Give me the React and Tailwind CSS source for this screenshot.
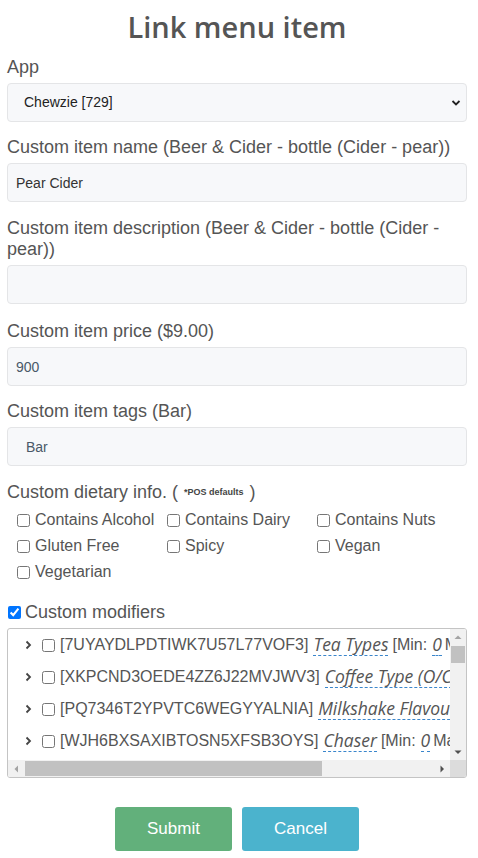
import { useState } from 'react';

const dietary = [
  'Contains Alcohol',
  'Contains Dairy',
  'Contains Nuts',
  'Gluten Free',
  'Spicy',
  'Vegan',
  'Vegetarian',
];

const modifiers = [
  { code: '7UYAYDLPDTIWK7U57L77VOF3', name: 'Tea Types', min: 0, max: 1 },
  { code: 'XKPCND3OEDE4ZZ6J22MVJWV3', name: 'Coffee Type (O/C)', min: 0, max: 1 },
  { code: 'PQ7346T2YPVTC6WEGYYALNIA', name: 'Milkshake Flavours', min: 0, max: 1 },
  { code: 'WJH6BXSAXIBTOSN5XFSB3OYS', name: 'Chaser', min: 0, max: 1 },
  { code: 'K3N5QZ7TRW2LMX4PYD6HJA8E', name: 'Milk Options', min: 0, max: 1 },
];

const italic = { fontFamily: '"Open Sans", sans-serif' };

function Label({ children }) {
  return <label className="block text-[18px] leading-[21px] text-[#555] mb-[5px]">{children}</label>;
}

function TextInput({ value, className = '' }) {
  return (
    <input
      type="text"
      defaultValue={value}
      className={`block w-full h-[39px] bg-[#f7f8fa] border border-[#e4e5e7] rounded-[4px] text-[14px] outline-none ${className}`}
    />
  );
}

function Chevron() {
  return (
    <svg width="7" height="10" viewBox="0 0 7 10" className="shrink-0">
      <path d="M1.5 1.5 L5 5 L1.5 8.5" fill="none" stroke="#444" strokeWidth="1.8" />
    </svg>
  );
}

function Linked({ children, className = '' }) {
  return (
    <span
      className={`italic text-[17.5px] leading-[21px] border-b border-dashed border-[#3a86cc] ${className}`}
      style={italic}
    >
      {children}
    </span>
  );
}

function ModifierRow({ m }) {
  return (
    <div className="flex items-center h-[32px] pl-[17px] whitespace-nowrap text-[16px] text-[#555]">
      <Chevron />
      <input type="checkbox" className="w-[13px] h-[13px] ml-[10px] mr-[5px] my-0" />
      <span>[{m.code}]</span>
      <Linked className="ml-[5px]">{m.name}</Linked>
      <span className="ml-[4px]">[Min:</span>
      <Linked className="ml-[5px]">{m.min}</Linked>
      <span className="ml-[3px]">Max:</span>
      <Linked className="ml-[5px]">{m.max}</Linked>
      <span>]</span>
    </div>
  );
}

function Arrow({ dir, color }) {
  const pts = {
    up: '0.5,5 4,1.5 7.5,5',
    down: '0.5,1.5 4,5 7.5,1.5',
    left: '5,0.5 1.5,4 5,7.5',
    right: '1.5,0.5 5,4 1.5,7.5',
  }[dir];
  const vertical = dir === 'up' || dir === 'down';
  return (
    <svg width={vertical ? 8 : 7} height={vertical ? 7 : 8} viewBox={vertical ? '0 0 8 7' : '0 0 7 8'}>
      <polygon points={pts} fill={color} />
    </svg>
  );
}

export default function App() {
  const [custom, setCustom] = useState(true);

  return (
    <div className="min-h-screen bg-white" style={{ fontFamily: '"Liberation Sans", Arial, sans-serif' }}>
      <div className="ml-[7px] w-[460px] pt-[7px] pb-[7px]">
        <h1
          className="text-center text-[29px] leading-[40px] font-semibold text-[#555] mb-[10px]"
          style={{ fontFamily: '"Open Sans", sans-serif' }}
        >
          Link menu item
        </h1>

        <div className="mb-[15px]">
          <Label>App</Label>
          <div className="relative">
            <select className="block w-full h-[39px] appearance-none bg-[#f7f8fa] border border-[#e4e5e7] rounded-[4px] pl-[16px] text-[14px] text-[#222] outline-none">
              <option>Chewzie [729]</option>
            </select>
            <svg width="10" height="8" viewBox="0 0 10 8" className="absolute right-[6px] top-[16px] pointer-events-none">
              <path d="M1.5 2 L5 5.5 L8.5 2" fill="none" stroke="#222" strokeWidth="1.8" />
            </svg>
          </div>
        </div>

        <div className="mb-[16px]">
          <Label>Custom item name (Beer &amp; Cider - bottle (Cider - pear))</Label>
          <TextInput value="Pear Cider" className="pl-[8px] text-[#333]" />
        </div>

        <div className="mb-[17px]">
          <Label>Custom item description (Beer &amp; Cider - bottle (Cider - pear))</Label>
          <TextInput value="" className="pl-[8px] text-[#333]" />
        </div>

        <div className="mb-[15px]">
          <Label>Custom item price ($9.00)</Label>
          <TextInput value="900" className="pl-[8px] text-[#4a5868]" />
        </div>

        <div className="mb-[16px]">
          <Label>Custom item tags (Bar)</Label>
          <TextInput value="Bar" className="pl-[18px] text-[#4a5868]" />
        </div>

        <div className="text-[18px] leading-[21px] text-[#555] flex items-center">
          <span>Custom dietary info. (</span>
          <span className="text-[9px] font-bold mx-[6px] text-[#444]">*POS defaults</span>
          <span>)</span>
        </div>
        <div className="grid grid-cols-[150px_150px_150px] pl-[10px] mt-[4px]">
          {dietary.map((d) => (
            <label key={d} className="flex items-center h-[26px] text-[16px] text-[#555] whitespace-nowrap">
              <input type="checkbox" className="w-[13px] h-[13px] my-0 ml-0 mr-[5px]" />
              {d}
            </label>
          ))}
        </div>

        <label className="flex items-center mt-[15px] h-[24px] text-[18px] text-[#555]">
          <input
            type="checkbox"
            checked={custom}
            onChange={(e) => setCustom(e.target.checked)}
            className="w-[13px] h-[13px] my-0 ml-[1px] mr-[4px]"
          />
          Custom modifiers
        </label>

        <div className="mt-[4px] h-[150px] border border-[#c4c4c4] rounded-[3px] overflow-hidden grid grid-cols-[1fr_16px] grid-rows-[1fr_17px]">
          <div className="overflow-hidden">
            {modifiers.map((m) => (
              <ModifierRow key={m.code} m={m} />
            ))}
          </div>
          <div className="bg-[#f1f1f1] flex flex-col">
            <div className="h-[16px] flex items-center justify-center">
              <Arrow dir="up" color="#a3a3a3" />
            </div>
            <div className="flex-1 pt-[1px]">
              <div className="mx-[1px] h-[17px] bg-[#c1c1c1]" />
            </div>
            <div className="h-[16px] flex items-center justify-center">
              <Arrow dir="down" color="#505050" />
            </div>
          </div>
          <div className="bg-[#f1f1f1] flex items-stretch">
            <div className="w-[16px] flex items-center justify-center">
              <Arrow dir="left" color="#a3a3a3" />
            </div>
            <div className="flex-1 flex items-center pl-[1px]">
              <div className="w-[297px] h-[15px] bg-[#c1c1c1]" />
            </div>
            <div className="w-[16px] flex items-center justify-center">
              <Arrow dir="right" color="#505050" />
            </div>
          </div>
          <div className="bg-[#dcdcdc]" />
        </div>

        <div className="flex justify-center gap-[10px] mt-[29px]">
          <button className="w-[117px] h-[44px] rounded-[3px] bg-[#62b07b] text-white text-[17px]">Submit</button>
          <button className="w-[117px] h-[44px] rounded-[3px] bg-[#4bb3cd] text-white text-[17px]">Cancel</button>
        </div>
      </div>
    </div>
  );
}
